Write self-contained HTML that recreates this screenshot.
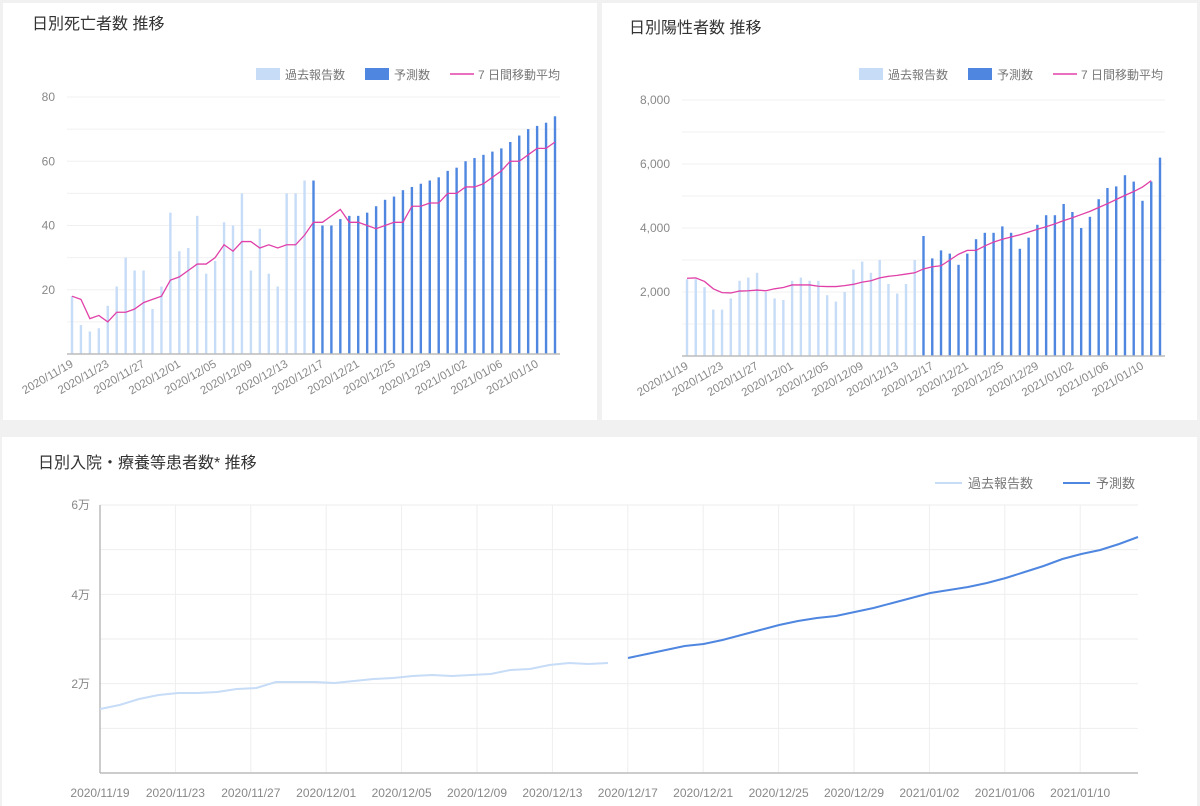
<!DOCTYPE html>
<html><head><meta charset="utf-8"><style>
html,body{margin:0;padding:0;background:#f1f1f1;width:1200px;height:806px;overflow:hidden;font-family:"Liberation Sans","Noto Sans CJK JP",sans-serif}
svg{position:absolute;left:0;top:0}
</style></head><body>
<svg id="s" width="1200" height="806" xmlns="http://www.w3.org/2000/svg" font-family="Liberation Sans, Noto Sans CJK JP, sans-serif">
<rect x="3" y="3" width="594" height="417" fill="#fff"/>
<rect x="602" y="3" width="595" height="417" fill="#fff"/>
<rect x="2" y="437" width="1195" height="369" fill="#fff"/>
<text x="32" y="29" font-size="16" fill="#333">日別死亡者数 推移</text>
<text x="629" y="33" font-size="16" fill="#333">日別陽性者数 推移</text>
<text x="38" y="468" font-size="16" fill="#333">日別入院・療養等患者数* 推移</text>
<g font-size="12" fill="#777">
<rect x="256" y="68" width="24" height="12" fill="#c6dcf7"/><text x="285" y="79">過去報告数</text>
<rect x="365" y="68" width="24" height="12" fill="#4e86e0"/><text x="394" y="79">予測数</text>
<line x1="450" y1="74" x2="474" y2="74" stroke="#e040a8" stroke-width="1.5"/><text x="478" y="79">7 日間移動平均</text>
<rect x="859" y="68" width="24" height="12" fill="#c6dcf7"/><text x="888" y="79">過去報告数</text>
<rect x="968" y="68" width="24" height="12" fill="#4e86e0"/><text x="997" y="79">予測数</text>
<line x1="1053" y1="74" x2="1077" y2="74" stroke="#e040a8" stroke-width="1.5"/><text x="1081" y="79">7 日間移動平均</text>
</g>
<g font-size="13" fill="#777">
<line x1="935" y1="483" x2="962" y2="483" stroke="#c6dcf7" stroke-width="2"/><text x="968" y="488">過去報告数</text>
<line x1="1063" y1="483" x2="1090" y2="483" stroke="#4e86e0" stroke-width="2"/><text x="1096" y="488">予測数</text>
</g>
<g id="g"></g>
</svg>
<script>
var g=document.getElementById('g'),h='';
function L(x1,y1,x2,y2,c,w){h+='<line x1="'+x1+'" y1="'+y1+'" x2="'+x2+'" y2="'+y2+'" stroke="'+c+'" stroke-width="'+(w||1)+'"/>';}
function T(x,y,t,a,extra){h+='<text x="'+x+'" y="'+y+'" font-size="12" fill="#888" text-anchor="'+(a||'start')+'" '+(extra||'')+'>'+t+'</text>';}
var dates=['2020/11/19','2020/11/23','2020/11/27','2020/12/01','2020/12/05','2020/12/09','2020/12/13','2020/12/17','2020/12/21','2020/12/25','2020/12/29','2021/01/02','2021/01/06','2021/01/10'];
function chart(x0,x1,base,top,max,labels,light,dark,ma,lab2){
  var n=light.length+dark.length, sp=(x1-x0-10)/(n-1), bx=x0+5;
  for(var i=1;i<=8;i++){var y=base-(base-top)*i/8;L(x0,y,x1,y,'#f0f0f0');}
  for(var k=0;k<4;k++){var y=base-(base-top)*(k+1)/4;T(x0-12,y+4,labels[k],'end');}
  var all=light.concat(dark);
  for(var i=0;i<n;i++){var x=bx+i*sp,y=base-(base-top)*all[i]/max;h+='<rect x="'+(x-1.2)+'" y="'+y+'" width="2.4" height="'+(base-y)+'" fill="'+(i<light.length?'#c6dcf7':'#4e86e0')+'"/>';}
  L(x0,base,x1,base,'#bbb',1.5);
  var p='';for(var i=0;i<ma.length;i++){p+=(bx+i*sp)+','+(base-(base-top)*ma[i]/max)+' ';}
  h+='<polyline points="'+p+'" fill="none" stroke="#e040a8" stroke-width="1.3"/>';
  for(var k=0;k<14;k++){var x=bx+k*4*sp+2;h+='<text x="'+x+'" y="'+(base+12)+'" font-size="11.5" fill="#888" text-anchor="end" transform="rotate(-30 '+x+' '+(base+12)+')">'+(lab2?lab2[k]:dates[k])+'</text>';}
}
chart(67,560,354,97,80,['20','40','60','80'],
[18,9,7,8,15,21,30,26,26,14,21,44,32,33,43,25,29,41,40,50,26,39,25,21,50,50,54],
[54,40,40,42,43,43,44,46,48,49,51,52,53,54,55,57,58,60,61,62,63,64,66,68,70,71,72,74],
[18,17,11,12,10,13,13,14,16,17,18,23,24,26,28,28,30,34,32,35,35,33,34,33,34,34,37,41,41,43,45,41,41,40,39,40,41,41,46,46,47,47,50,50,52,52,53,55,57,60,60,62,64,64,66]);
var d2=dates.slice();d2[4]='2020/12/...';d2[5]='2020/12/...';
chart(682,1165,356,100,8000,['2,000','4,000','6,000','8,000'],
[2400,2400,2150,1450,1450,1800,2350,2450,2600,2000,1800,1750,2350,2450,2350,2350,1900,1700,2000,2700,2950,2600,3000,2250,1950,2250,3000],
[3750,3050,3300,3200,2850,3200,3650,3850,3850,4050,3850,3350,3700,4100,4400,4400,4750,4500,4000,4350,4900,5250,5300,5650,5450,4850,5450,6200],
[2430,2440,2330,2100,1980,1970,2030,2040,2060,2040,2100,2140,2220,2220,2220,2180,2170,2170,2200,2240,2310,2350,2440,2490,2520,2560,2600,2720,2790,2820,3000,3180,3300,3300,3440,3560,3650,3720,3790,3870,3960,4040,4130,4230,4320,4420,4520,4640,4760,4890,5020,5140,5280,5480]);
// bottom chart
var bx0=100,bx1=1138,bb=773,bt=505;
for(var i=1;i<=6;i++){var y=bb-(bb-bt)*i/6;L(bx0,y,bx1,y,'#eee');}
for(var k=0;k<14;k++){var x=bx0+k*75.4;if(k>0)L(x,bt,x,bb,'#eee');T(x,797,dates[k],'middle','font-size="11"');}
T(90,509,'6万','end');T(90,599,'4万','end');T(90,688,'2万','end');
L(bx0,bt,bx0,bb,'#bbb',1.5);L(bx0,bb,bx1,bb,'#bbb',1.5);
var ly=[709,705,699,695,693,693,692,689,688,682,682,682,683,681,679,678,676,675,676,675,674,670,669,665,663,664,663];
var dy=[658,654,650,646,644,640,635,630,625,621,618,616,612,608,603,598,593,590,587,583,578,572,566,559,554,550,544,537];
var sp=18.85,p='';for(var i=0;i<ly.length;i++)p+=(bx0+i*(508/26))+','+ly[i]+' ';
h+='<polyline points="'+p+'" fill="none" stroke="#c6dcf7" stroke-width="2"/>';
p='';for(var i=0;i<dy.length;i++)p+=(628+i*(510/27))+','+dy[i]+' ';
h+='<polyline points="'+p+'" fill="none" stroke="#4e86e0" stroke-width="2"/>';
g.innerHTML=h;
</script>
</body></html>
